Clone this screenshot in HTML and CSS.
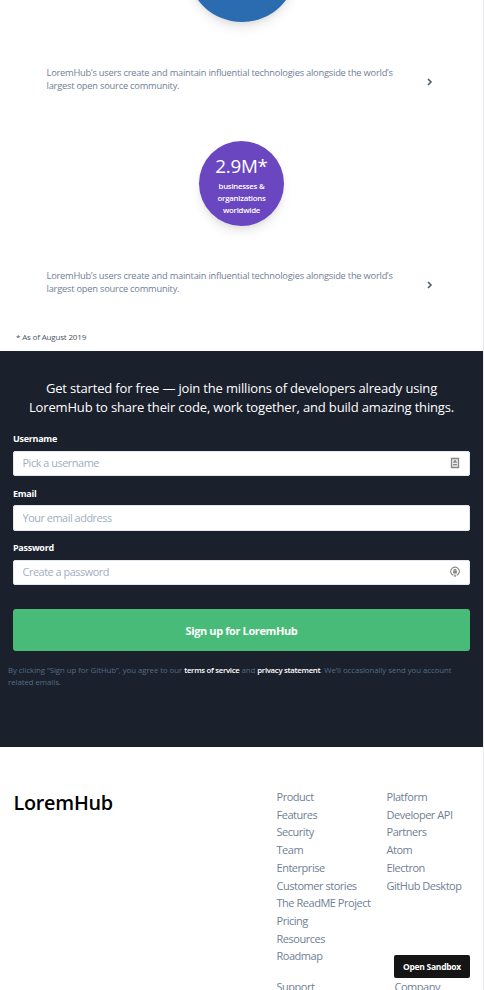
FILE: index.html
```html
<!DOCTYPE html>
<html lang="en">
<head>
<meta charset="utf-8">
<title>LoremHub</title>
<link rel="stylesheet" href="styles.css">
</head>
<body>
<main class="page">
  <section class="stats">
    <div class="circle circle-blue"></div>
    <div class="fact">
      <p>LoremHub’s users create and maintain influential technologies alongside the world’s<br><span class="f2">largest open source community.</span></p>
      <svg class="chevron" viewBox="0 0 6 8"><path d="M1 1l3 3-3 3"/></svg>
    </div>
    <div class="circle circle-purple">
      <strong>2.9M*</strong>
      <span>businesses &amp;<br>organizations<br>worldwide</span>
    </div>
    <div class="fact">
      <p>LoremHub’s users create and maintain influential technologies alongside the world’s<br><span class="f2">largest open source community.</span></p>
      <svg class="chevron" viewBox="0 0 6 8"><path d="M1 1l3 3-3 3"/></svg>
    </div>
    <p class="note">* As of August 2019</p>
  </section>
  <section class="signup">
    <h2>Get started for free — join the millions of developers already using<br>LoremHub to share their code, work together, and build amazing things.</h2>
    <form>
      <label for="u" class="first-label">Username</label>
      <div class="field"><input id="u" placeholder="Pick a username">
        <svg class="icon" viewBox="0 0 10 12"><path class="line" d="M1.500 1.500h7v9h-7z"/><path class="solid" d="M4.200 3h1.600v1.600h1.200v1.200H3V4.600h1.200zM3 7h4v1.300H3z"/></svg>
      </div>
      <label for="e">Email</label>
      <div class="field"><input id="e" placeholder="Your email address"></div>
      <label for="p">Password</label>
      <div class="field"><input id="p" placeholder="Create a password">
        <svg class="icon" viewBox="0 0 10 12"><path class="ring" d="M3.200 9.300A4.300 4.300 0 1 1 6.800 9.300"/><path class="ring" d="M4 5V4.200a1 1 0 0 1 2 0V5"/><path class="solid" d="M3.200 4.800h3.600v2.700H3.200zM4.500 8.300h1V9.500h1L5 11.300 3.500 9.500h1z"/></svg>
      </div>
      <button type="button">Sign up for LoremHub</button>
    </form>
    <p class="terms">By clicking “Sign up for GitHub”, you agree to our <b>terms of service</b> and <b>privacy statement</b>. We’ll occasionally send you account<br>related emails.</p>
  </section>
  <footer>
    <div class="brand">LoremHub</div>
    <div class="links">
      <div class="group">
        <ul class="first"><li>Product</li><li>Features</li><li>Security</li><li>Team</li><li>Enterprise</li><li>Customer stories</li><li>The ReadME Project</li><li>Pricing</li><li>Resources</li><li>Roadmap</li></ul>
        <ul><li>Platform</li><li>Developer API</li><li>Partners</li><li>Atom</li><li>Electron</li><li>GitHub Desktop</li></ul>
      </div>
      <div class="group second">
        <ul class="first"><li>Support</li></ul>
        <ul><li>Company</li></ul>
      </div>
    </div>
  </footer>
</main>
<a class="sandbox">Open Sandbox</a>
</body>
</html>
```
FILE: styles.css
```css
* { box-sizing: border-box; margin: 0; padding: 0; }
html, body { height: 990px; overflow: hidden; }
body { background: #fff; font-family: "Open Sans", "Noto Sans", sans-serif; white-space: nowrap; }
.page { width: 484px; height: 990px; overflow: hidden; border-right: 1px solid #ececee; }
.stats { height: 351px; display: flex; flex-direction: column; align-items: center; background: #fff; }
.circle { flex: none; border-radius: 50%; color: #fff; text-align: center; box-shadow: 0 7px 12px -2px rgba(0,0,0,.1), 0 3px 5px -1px rgba(0,0,0,.05); }
.circle-blue { width: 110px; height: 110px; margin-top: -88px; background: #2b6cb0; }
.circle-purple { width: 85px; height: 85px; margin-top: 48px; padding-top: 12px; background: #6b46c1; }
.circle strong { display: block; font-size: 18.8px; line-height: 26px; font-weight: 400; letter-spacing: -.25px; }
.circle span { display: block; padding-top: 1px; font-size: 7.8px; line-height: 12px; font-weight: 600; letter-spacing: -.25px; }
.fact { width: 390px; height: 27px; margin-top: 44px; display: flex; justify-content: space-between; align-self: flex-start; margin-left: 46px; color: #718096; font-size: 9.3px; line-height: 13px; letter-spacing: -.12px; }
.fact p { padding-left: .5px; letter-spacing: -.22px; }
.circle-purple + .fact { margin-top: 43px; }
.chevron { width: 6px; height: 8px; margin: 11.5px 3px 0 0; fill: none; stroke: #4a5568; stroke-width: 1.5; }
.note { align-self: flex-start; margin: 35px 0 0 16px; font-size: 8px; line-height: 12px; color: #4a5568; letter-spacing: -.17px; }
.signup { height: 396px; padding-top: 28px; background: #1a202c; }
.signup h2 { color: #fff; font-size: 13px; line-height: 19px; font-weight: 400; text-align: center; letter-spacing: -.165px; }
form { margin: 0 13px; display: flex; flex-direction: column; }
label { color: #fff; font-size: 9px; line-height: 12px; font-weight: 700; letter-spacing: -.28px; margin-top: 11.5px; }
.first-label { margin-top: 16px; }
.field { height: 25.5px; margin-top: 5.5px; display: flex; align-items: center; background: #fff; border: 1px solid #e2e8f0; border-radius: 2px; padding: 0 9px 0 8.5px; }
input { flex: 1; min-width: 0; border: 0; outline: 0; background: none; font: 10.9px/15px "Open Sans", sans-serif; letter-spacing: -.46px; margin-top: -1px; }
input::placeholder { color: #a0aec0; opacity: 1; }
.icon { width: 10px; height: 12px; }
.line { fill: #eee; stroke: #858585; stroke-width: 1.3; }
.ring { fill: none; stroke: #858585; stroke-width: 1.1; }
.solid { fill: #858585; }
button { height: 42px; margin-top: 24px; border: 0; border-radius: 3px; background: #48bb78; color: #fff; font: 700 11px "Open Sans", sans-serif; letter-spacing: -.39px; }
.terms { margin: 13px 0 0 8px; color: #566c85; font-size: 7.8px; line-height: 12px; letter-spacing: -.04px; }
.terms b { color: #fff; font-weight: 600; letter-spacing: -.3px; }
footer { display: flex; padding: 41px 0 0 13.5px; }
.brand { width: 263px; height: 28px; margin-top: 1px; color: #000; font-size: 19.8px; line-height: 28px; font-weight: 600; letter-spacing: -.25px; }
.links { color: #718096; font-size: 11px; line-height: 17.7px; letter-spacing: -.47px; }
ul { list-style: none; }
.group { display: flex; }
.first { width: 110px; }
.second { margin-top: 13px; }
.second .first { width: 118px; }
.sandbox { position: absolute; left: 394px; top: 955px; width: 76px; height: 23px; display: flex; align-items: center; justify-content: center; background: #151515; border-radius: 2px; color: #fff; font-size: 8.5px; font-weight: 700; letter-spacing: -.28px; }
```
